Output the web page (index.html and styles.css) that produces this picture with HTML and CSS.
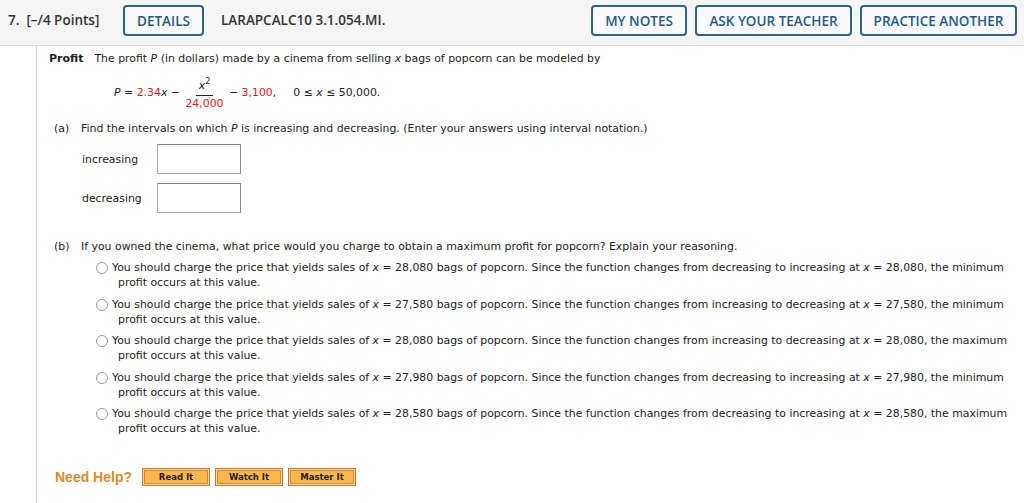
FILE: index.html
```html
<!DOCTYPE html>
<html>
<head>
<meta charset="utf-8">
<link rel="stylesheet" href="styles.css">
</head>
<body>
<div class="header">
  <div class="qnum">7.&nbsp; [–/4 Points]</div>
  <div class="hbtn details">DETAILS</div>
  <div class="code">LARAPCALC10 3.1.054.MI.</div>
  <div class="spacer"></div>
  <div class="hbtn notes">MY NOTES</div>
  <div class="hbtn ask">ASK YOUR TEACHER</div>
  <div class="hbtn practice">PRACTICE ANOTHER</div>
</div>
<div class="main">
  <p class="intro"><b class="ttl">Profit</b>The profit <i>P</i> (in dollars) made by a cinema from selling <i>x</i> bags of popcorn can be modeled by</p>
  <div class="eq">
    <span><i>P</i> = <span class="red">2.34</span><i>x</i> − </span>
    <span class="frac"><span class="num"><i>x</i><sup>2</sup></span><span class="den red">24,000</span></span>
    <span> − <span class="red">3,100</span>,</span>
    <span class="dom">0 ≤ <i>x</i> ≤ 50,000.</span>
  </div>
  <div class="part">
    <span class="plabel">(a)</span>
    <span>Find the intervals on which <i>P</i> is increasing and decreasing. (Enter your answers using interval notation.)</span>
  </div>
  <div class="field"><span class="flabel">increasing</span><span class="box"></span></div>
  <div class="field"><span class="flabel">decreasing</span><span class="box"></span></div>

  <div class="part partb">
    <span class="plabel">(b)</span>
    <span>If you owned the cinema, what price would you charge to obtain a maximum profit for popcorn? Explain your reasoning.</span>
  </div>
  <div class="opts">
    <div class="opt"><span class="radio"></span><span class="otext">You should charge the price that yields sales of <i>x</i> = 28,080 bags of popcorn. Since the function changes from decreasing to increasing at <i>x</i> = 28,080, the minimum<br>profit occurs at this value.</span></div>
    <div class="opt"><span class="radio"></span><span class="otext">You should charge the price that yields sales of <i>x</i> = 27,580 bags of popcorn. Since the function changes from increasing to decreasing at <i>x</i> = 27,580, the minimum<br>profit occurs at this value.</span></div>
    <div class="opt"><span class="radio"></span><span class="otext">You should charge the price that yields sales of <i>x</i> = 28,080 bags of popcorn. Since the function changes from increasing to decreasing at <i>x</i> = 28,080, the maximum<br>profit occurs at this value.</span></div>
    <div class="opt"><span class="radio"></span><span class="otext">You should charge the price that yields sales of <i>x</i> = 27,980 bags of popcorn. Since the function changes from decreasing to increasing at <i>x</i> = 27,980, the minimum<br>profit occurs at this value.</span></div>
    <div class="opt"><span class="radio"></span><span class="otext">You should charge the price that yields sales of <i>x</i> = 28,580 bags of popcorn. Since the function changes from decreasing to increasing at <i>x</i> = 28,580, the maximum<br>profit occurs at this value.</span></div>
  </div>
  <div class="help">
    <span class="need">Need Help?</span>
    <span class="hb">Read It</span>
    <span class="hb">Watch It</span>
    <span class="hb">Master It</span>
  </div>
</div>
</body>
</html>
```
FILE: styles.css
```css
html, body { margin: 0; padding: 0; background: #fff; }
body { font-family: "DejaVu Sans", Verdana, sans-serif; color: #222; font-size: 10.9px; }

.header {
  height: 40px;
  background: #f5f5f5;
  border-bottom: 1px solid #dcdcdc;
  display: flex;
  align-items: flex-start;
  padding: 5px 7px 0 8px;
  font-family: "Open Sans", sans-serif;
  font-weight: 600;
  font-size: 13.5px;
  color: #333;
}
.qnum, .code { line-height: 31px; }
.qnum { width: 115px; }
.code { margin-left: 17px; }
.spacer { flex: 1; }
.hbtn {
  box-sizing: border-box;
  height: 31px;
  border: 2px solid #2a6496;
  border-radius: 4px;
  color: #1f5a8a;
  background: #fafafa;
  display: flex;
  align-items: center;
  justify-content: center;
}
.details { width: 81px; }
.notes { width: 96px; }
.ask { width: 157px; margin-left: 8px; }
.practice { width: 157px; margin-left: 8px; }

.main {
  margin-left: 36px;
  border-left: 1px solid #d4d4d4;
  padding-left: 12px;
  padding-top: 5px;
  min-height: 460px;
}
.intro { margin: 0; line-height: 15px; }
.ttl { font-weight: bold; font-size: 11px; margin-right: 11px; }
.red { color: #e8141c; }
.eq { display: flex; align-items: center; margin-left: 65px; margin-top: 5px; height: 42px; white-space: pre; }
.frac { display: inline-flex; flex-direction: column; align-items: center; margin: 0 2px; }
.frac .num { border-bottom: 1px solid #222; padding: 0 3px 1px; line-height: 16px; }
.frac .num sup { font-size: 8px; vertical-align: 5px; }
.frac .den { line-height: 15px; padding-top: 0; }
.dom { margin-left: 17px; }

.part { display: flex; margin-left: 5px; line-height: 15px; margin-top: 8px; }
.plabel { width: 27px; }
.field { display: flex; align-items: center; margin-left: 33px; margin-top: 9px; }
.part + .field { margin-top: 8px; }
.flabel { width: 75px; }
.box {
  width: 84px; height: 30px; box-sizing: border-box;
  border: 1px solid #aaa; border-top-color: #888; border-right-color: #888;
  background: #fff;
}
.partb { margin-top: 26px; }
.opts { margin-left: 47px; margin-top: 6px; }
.opt { display: flex; line-height: 15px; margin-bottom: 6.5px; }
.radio {
  width: 10px; height: 10px; border: 1px solid #999; border-radius: 50%;
  margin-top: 2px; margin-right: 4px; flex: none;
  background: #fff;
}
.otext { padding-left: 6px; text-indent: -6px; }

.help { display: flex; align-items: center; margin-left: 6px; margin-top: 32px; }
.need { font-family: "Liberation Sans", Arial, sans-serif; font-weight: bold; font-size: 14px; color: #e8872c; margin-right: 10px; }
.hb {
  box-sizing: border-box;
  width: 68px; height: 18px; margin-right: 5px;
  border: 1px solid #c6782c;
  box-shadow: inset 0 0 0 1px #f7d9a8, inset 0 0 0 2px #d18a36;
  background: #fbb84f;
  font-family: "DejaVu Sans", Verdana, sans-serif;
  font-weight: bold; font-size: 8.5px; color: #222;
  display: flex; align-items: center; justify-content: center;
}
```
